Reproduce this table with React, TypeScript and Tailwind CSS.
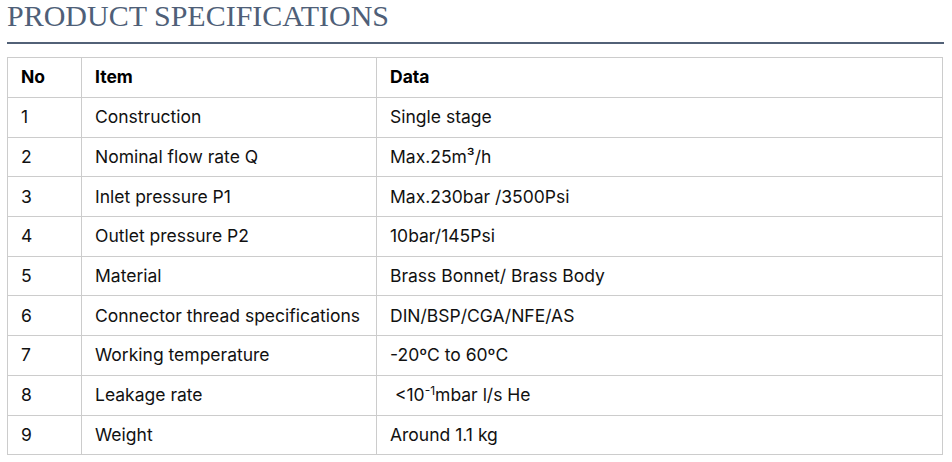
import React from "react";

const rows: [string, string, React.ReactNode][] = [
  ["1", "Construction", "Single stage"],
  ["2", "Nominal flow rate Q", <>Max.25m³/h</>],
  ["3", "Inlet pressure P1", "Max.230bar /3500Psi"],
  ["4", "Outlet pressure P2", "10bar/145Psi"],
  ["5", "Material", "Brass Bonnet/ Brass Body"],
  ["6", "Connector thread specifications", "DIN/BSP/CGA/NFE/AS"],
  ["7", "Working temperature", "-20ºC to 60ºC"],
  [
    "8",
    "Leakage rate",
    <>
      &nbsp;&lt;10<sup className="text-[12px]">-1</sup>mbar l/s He
    </>,
  ],
  ["9", "Weight", "Around 1.1 kg"],
];

const App = () => {
  return (
    <div className="w-[952px] h-[462px] bg-white px-[7px]">
      <h2 className="text-[30px] leading-[32px] text-[#4f5f78] font-['Liberation_Serif',serif]">
        PRODUCT SPECIFICATIONS
      </h2>
      <div className="mt-[10px] h-[2px] w-[937px] bg-[#526177]" />
      <table className="mt-[13px] w-[936px] border-collapse table-fixed text-[17.5px] text-[#111] font-['Inter',sans-serif]">
        <colgroup>
          <col className="w-[74px]" />
          <col className="w-[295px]" />
          <col />
        </colgroup>
        <thead>
          <tr className="h-[40px]">
            <th className="border border-[#cccccc] px-[13px] text-left font-bold text-[17.5px] text-black">No</th>
            <th className="border border-[#cccccc] px-[13px] text-left font-bold text-[17.5px] text-black">Item</th>
            <th className="border border-[#cccccc] px-[13px] text-left font-bold text-[17.5px] text-black">Data</th>
          </tr>
        </thead>
        <tbody>
          {rows.map(([no, item, data]) => (
            <tr key={no} className="h-[39.7px]">
              <td className="border border-[#cccccc] px-[13px]">{no}</td>
              <td className="border border-[#cccccc] px-[13px]">{item}</td>
              <td className="border border-[#cccccc] px-[13px]">{data}</td>
            </tr>
          ))}
        </tbody>
      </table>
    </div>
  );
};

export default App;
